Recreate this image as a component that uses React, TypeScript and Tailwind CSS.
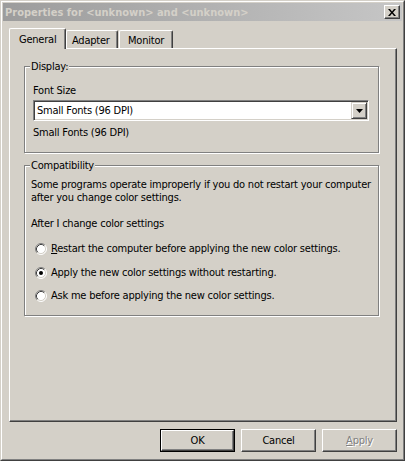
import React from "react";

const FONT = { fontFamily: '"DejaVu Sans Condensed", "Liberation Sans", sans-serif' };

function Radio({ checked }: { checked?: boolean }) {
  return (
    <svg width="12" height="12" viewBox="0 0 12 12" className="ml-[4px] mr-[4px] shrink-0">
      <circle cx="6" cy="6" r="5" fill="#fff" />
      <path d="M2.11 9.89A5.5 5.5 0 0 1 9.89 2.11" fill="none" stroke="#808080" strokeWidth="1" />
      <path d="M9.89 2.11A5.5 5.5 0 0 1 2.11 9.89" fill="none" stroke="#fff" strokeWidth="1" />
      <path d="M2.82 9.18A4.5 4.5 0 0 1 9.18 2.82" fill="none" stroke="#404040" strokeWidth="1" />
      <path d="M9.18 2.82A4.5 4.5 0 0 1 2.82 9.18" fill="none" stroke="#d4d0c8" strokeWidth="1" />
      {checked && <circle cx="6" cy="6" r="2" fill="#000" />}
    </svg>
  );
}

function Group({
  label,
  className,
  children,
}: {
  label: string;
  className?: string;
  children: React.ReactNode;
}) {
  return (
    <div
      className={
        "relative ml-[14px] w-[355px] border border-[#808080] shadow-[1px_1px_0_#fff,inset_1px_1px_0_#fff] " +
        (className ?? "")
      }
    >
      <span className="absolute -top-[7px] left-[5px] bg-[#d4d0c8] px-[1px] leading-[13px]">
        {label}
      </span>
      {children}
    </div>
  );
}

function Tab({ label, active, className }: { label: string; active?: boolean; className?: string }) {
  return (
    <div
      className={
        "flex items-start border-l border-t border-r border-l-white border-t-white border-r-[#404040] bg-[#d4d0c8] shadow-[inset_-1px_0_0_#808080] rounded-tl-[2px] rounded-tr-[2px] " +
        (active ? "relative z-10 -mb-px h-[21px] pl-[9px] pt-[4px] " : "h-[18px] pt-[3px] ") +
        (className ?? "")
      }
    >
      <span className="leading-[13px]">{label}</span>
    </div>
  );
}

function Button({ label, isDefault, disabled }: { label: React.ReactNode; isDefault?: boolean; disabled?: boolean }) {
  const inner = (
    <div className="flex h-full w-full items-center justify-center border-l border-t border-r border-b border-l-white border-t-white border-r-[#404040] border-b-[#404040] shadow-[inset_-1px_-1px_0_#808080]">
      <span
        className={
          "leading-[13px] " +
          (disabled ? "text-[#808080] [text-shadow:1px_1px_0_#fff]" : "text-black")
        }
      >
        {label}
      </span>
    </div>
  );
  return (
    <div className={"h-[23px] w-[75px] " + (isDefault ? "border border-black" : "")}>{inner}</div>
  );
}

export default function App() {
  return (
    <div
      style={FONT}
      className="h-[461px] w-[405px] whitespace-nowrap border border-t-[#d4d0c8] border-l-[#d4d0c8] border-r-[#404040] border-b-[#404040] bg-[#d4d0c8] text-[11px] tracking-[-0.22px] text-black"
    >
      <div className="flex h-full flex-col border border-t-white border-l-white border-r-[#808080] border-b-[#808080] p-px">
        {/* title bar */}
        <div className="flex h-[18px] items-center bg-gradient-to-r from-[#9c9c9c] to-[#c6c6c6] pl-[2px] pr-[2px]">
          <span className="flex-1 text-[11px] font-bold leading-[13px] tracking-normal text-[#d4d0c8]">
            Properties for &lt;unknown&gt; and &lt;unknown&gt;
          </span>
          <div className="flex h-[14px] w-[16px] items-center justify-center border-l border-t border-r border-b border-l-white border-t-white border-r-[#404040] border-b-[#404040] bg-[#d4d0c8] shadow-[inset_-1px_-1px_0_#808080]">
            <svg width="8" height="7" viewBox="0 0 8 7">
              <path d="M0 0h2l2 2.5L6 0h2L5 3.5 8 7H6L4 4.5 2 7H0l3-3.5z" fill="#000" />
            </svg>
          </div>
        </div>

        {/* body */}
        <div className="flex flex-1 flex-col pl-[6px] pr-[5px] pt-[7px]">
          <div className="flex h-[20px] items-end">
            <Tab label="General" active className="w-[57px]" />
            <Tab label="Adapter" className="w-[52px] pl-[5px]" />
            <Tab label="Monitor" className="ml-px w-[54px] pl-[8px]" />
          </div>

          <div className="flex h-[374px] flex-col border-l border-t border-r border-b border-l-white border-t-white border-r-[#404040] border-b-[#404040] shadow-[inset_-1px_-1px_0_#808080]">
            <Group label="Display:" className="mt-[17px] pl-[8px] pt-[17px] pb-[13px]">
              <div className="leading-[13px]">Font Size</div>
              <div className="mt-[3px] flex h-[21px] w-[336px] border border-t-[#808080] border-l-[#808080] border-b-white border-r-white bg-white p-px shadow-[inset_1px_1px_0_#404040,inset_-1px_-1px_0_#d4d0c8]">
                <div className="flex flex-1 items-center pl-[2px] leading-[13px]">Small Fonts (96 DPI)</div>
                <div className="flex h-full w-[16px] items-center justify-center border border-t-[#d4d0c8] border-l-[#d4d0c8] border-r-[#404040] border-b-[#404040] bg-[#d4d0c8] shadow-[inset_1px_1px_0_#fff,inset_-1px_-1px_0_#808080]">
                  <svg width="7" height="4" viewBox="0 0 7 4">
                    <path d="M0 0h7L3.5 4z" fill="#000" />
                  </svg>
                </div>
              </div>
              <div className="mt-[5px] leading-[13px]">Small Fonts (96 DPI)</div>
            </Group>

            <Group label="Compatibility" className="mt-[12px] pl-[6px] pt-[12px] pb-[13px]">
              <div className="leading-[13px]">
                Some programs operate improperly if you do not restart your computer
                <br />
                after you change color settings.
              </div>
              <div className="mt-[13px] leading-[13px]">After I change color settings</div>
              <div className="mt-[12px] flex items-center leading-[13px]">
                <Radio />
                <span>
                  <span className="underline">R</span>estart the computer before applying the new color settings.
                </span>
              </div>
              <div className="mt-[11px] flex items-center leading-[13px]">
                <Radio checked />
                <span>Apply the new color settings without restarting.</span>
              </div>
              <div className="mt-[10px] flex items-center leading-[13px]">
                <Radio />
                <span>Ask me before applying the new color settings.</span>
              </div>
            </Group>
          </div>

          <div className="mt-[7px] flex justify-end gap-[6px]">
            <Button label="OK" isDefault />
            <Button label="Cancel" />
            <Button
              label={
                <>
                  <span className="underline">A</span>pply
                </>
              }
              disabled
            />
          </div>
        </div>
      </div>
    </div>
  );
}
